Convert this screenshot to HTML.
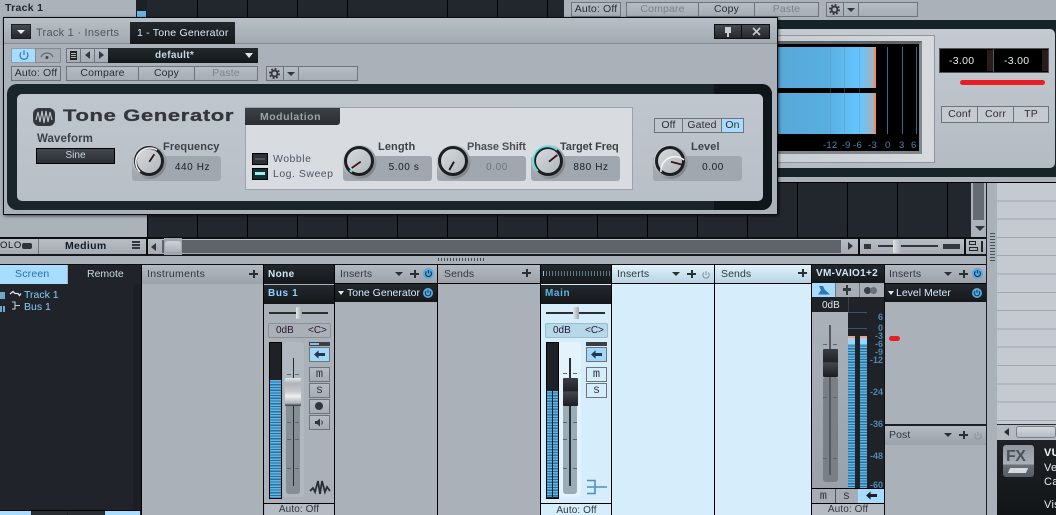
<!DOCTYPE html>
<html><head><meta charset="utf-8">
<style>
html,body{margin:0;padding:0;background:#a9b0b8}
#r{position:relative;width:1056px;height:515px;overflow:hidden;background:#aab1b9;font-family:"Liberation Sans",sans-serif;font-size:11px;color:#2b2e33}
#r div{position:absolute;box-sizing:border-box}
#r svg.i{position:absolute;overflow:visible}
.t{position:absolute;white-space:nowrap;line-height:12px;letter-spacing:.3px}
.c{text-align:center}
.b{font-weight:bold}
.btn{border:1px solid #6d747c;background:linear-gradient(#b6bcc3,#a6adb5);text-align:center;line-height:13px;color:#2b2e33;font-size:10.5px;letter-spacing:.15px;white-space:nowrap}
.ms{font-family:"Liberation Mono",monospace;font-size:12px;line-height:12px;color:#33363b}
.hd{background:linear-gradient(#b3bac1,#9aa1a9);height:19px}
.dk{background:linear-gradient(#23282d,#14181b)}
.vb{background:#a0a7ae;border-radius:3px}
.bars{background:repeating-linear-gradient(#5fb5e6 0 1.5px,#2d6f9c 1.5px 2.7px)}
.tk{width:4px;height:1px;background:#5f656c}
</style></head><body><div id="r">
<svg width="0" height="0" style="position:absolute"><defs>
<symbol id="pw" viewBox="0 0 12 12"><circle cx="6" cy="6" r="6" fill="#5aa9e0"/><path d="M3.8 3.8A3.2 3.2 0 1 0 8.2 3.8M6 2.2V6" stroke="#143a5a" stroke-width="1.3" fill="none"/></symbol>
<symbol id="pg" viewBox="0 0 12 12"><path d="M3.4 3.2A3.8 3.8 0 1 0 8.6 3.2M6 1.4V6" stroke="#8d949b" stroke-width="1.3" fill="none"/></symbol>
<symbol id="ar" viewBox="0 0 12 9"><path d="M0 4.5L5 0V2.8H12V6.2H5V9Z"/></symbol>
<symbol id="gr" viewBox="0 0 12 12"><circle cx="6" cy="6" r="3.2" fill="none" stroke="#33363b" stroke-width="2"/><circle cx="6" cy="6" r="5" fill="none" stroke="#33363b" stroke-width="2" stroke-dasharray="2 1.93"/></symbol>
</defs></svg>

<!-- arrangement background -->
<div style="left:0;top:0;width:136px;height:182px;background:#abb2ba"></div>
<span class="t b" style="left:5px;top:2px;color:#24272b;font-size:10.5px">Track 1</span>
<div style="left:136px;top:0;width:11px;height:18px;background:#1d2126"></div>
<div style="left:137px;top:11px;width:9px;height:7px;background:#6ab2e4"></div>
<div style="left:147px;top:0;width:420px;height:18px;background:#22272d"></div>
<div style="left:197px;top:0;width:1px;height:18px;background:#000"></div>
<div style="left:247px;top:0;width:1px;height:18px;background:#000"></div>
<div style="left:297px;top:0;width:1px;height:18px;background:#000"></div>
<div style="left:347px;top:0;width:1px;height:18px;background:#000"></div>
<div style="left:447px;top:0;width:1px;height:18px;background:#000"></div>
<div style="left:497px;top:0;width:1px;height:18px;background:#000"></div>
<div style="left:547px;top:0;width:1px;height:18px;background:#000"></div>

<!-- second plugin behind -->
<div style="left:564px;top:0;width:492px;height:182px;background:#aab1b9"></div>
<div class="btn" style="left:571px;top:2px;width:50px;height:15px">Auto: Off</div>
<div class="btn" style="left:626px;top:2px;width:73px;height:15px;color:#7b828a">Compare</div>
<div class="btn" style="left:698px;top:2px;width:57px;height:15px">Copy</div>
<div class="btn" style="left:754px;top:2px;width:65px;height:15px;color:#7b828a">Paste</div>
<div class="btn" style="left:826px;top:2px;width:18px;height:15px"></div>
<svg class="i" style="left:829px;top:4px" width="11" height="11"><use href="#gr"/></svg>
<div class="btn" style="left:843px;top:2px;width:16px;height:15px"></div>
<div style="left:847px;top:8px;width:0;height:0;border:4px solid transparent;border-top:4px solid #33363b"></div>
<div class="btn" style="left:858px;top:2px;width:60px;height:15px"></div>
<div style="left:777px;top:20px;width:279px;height:157px;background:#162327"></div>
<div style="left:777px;top:29px;width:278px;height:139px;background:linear-gradient(#c4cad0,#b4bbc3);border-radius:0 5px 5px 0"></div>
<div style="left:777px;top:35px;width:158px;height:128px;background:linear-gradient(90deg,#c8cdd2,#d6dadd);border:1px solid #8e959c;border-left:0"></div>
<div style="left:777px;top:41px;width:145px;height:113px;background:#000;border-top:3px solid #5e646b;border-right:3px solid #7e858c;border-bottom:3px solid #7e858c"></div>
<div style="left:777px;top:47px;width:98px;height:41px;background:linear-gradient(90deg,#58a8d9,#58aee0 50%,#66c6ff 85%,#a2b2bf 98%)"></div>
<div style="left:777px;top:93px;width:98px;height:41px;background:linear-gradient(90deg,#58a8d9,#58aee0 50%,#66c6ff 85%,#a2b2bf 98%)"></div>
<div style="left:874px;top:47px;width:1.5px;height:41px;background:#f08a60"></div>
<div style="left:874px;top:93px;width:1.5px;height:41px;background:#f08a60"></div>
<div style="left:830px;top:47px;width:1px;height:87px;background:rgba(90,140,170,.35)"></div>
<div style="left:844px;top:47px;width:1px;height:87px;background:rgba(90,140,170,.35)"></div>
<div style="left:859px;top:47px;width:1px;height:87px;background:rgba(90,140,170,.35)"></div>
<div style="left:887px;top:47px;width:1px;height:87px;background:#3d6a8c"></div>
<div style="left:902px;top:47px;width:1px;height:87px;background:#3d6a8c"></div>
<div style="left:916px;top:47px;width:1px;height:87px;background:#3d6a8c"></div>
<span class="t" style="left:823px;top:140px;color:#4f83aa;font-size:9.5px;letter-spacing:.2px;word-spacing:1.5px">-12 -9</span>
<span class="t" style="left:853px;top:140px;color:#4f83aa;font-size:9.5px">-6</span>
<span class="t" style="left:868px;top:140px;color:#4f83aa;font-size:9.5px">-3</span>
<span class="t" style="left:885px;top:140px;color:#4f83aa;font-size:9.5px">0</span>
<span class="t" style="left:899px;top:140px;color:#4f83aa;font-size:9.5px">3</span>
<span class="t" style="left:911px;top:140px;color:#4f83aa;font-size:9.5px">6</span>
<div style="left:939px;top:48px;width:110px;height:25px;background:#000;border:1px solid #555"></div>
<div style="left:987px;top:50px;width:7px;height:21px;background:#2a1c18"></div>
<div style="left:1042px;top:50px;width:6px;height:21px;background:#2a1c18"></div>
<div style="left:993px;top:49px;width:1px;height:23px;background:#555"></div>
<span class="t" style="left:949px;top:55px;color:#e8eef2;font-size:10.5px">-3.00</span>
<span class="t" style="left:1004px;top:55px;color:#e8eef2;font-size:10.5px">-3.00</span>
<div style="left:960px;top:80px;width:85px;height:5px;background:#ea1c24;border-radius:3px"></div>
<div class="btn" style="left:941px;top:106px;width:37px;height:17px;line-height:15px;background:#c4cad0">Conf</div>
<div class="btn" style="left:977px;top:106px;width:37px;height:17px;line-height:15px;background:#c4cad0">Corr</div>
<div class="btn" style="left:1013px;top:106px;width:36px;height:17px;line-height:15px;background:#c4cad0">TP</div>

<!-- arrangement lower -->
<div style="left:0;top:182px;width:147px;height:56px;background:#abb2ba"></div>
<div style="left:147px;top:182px;width:824px;height:56px;background:#22272d"></div>
<div style="left:147px;top:182px;width:909px;height:1px;background:#000"></div>
<div style="left:147px;top:182px;width:1px;height:56px;background:#000"></div>
<div style="left:197px;top:214px;width:1px;height:24px;background:#000"></div>
<div style="left:247px;top:214px;width:1px;height:24px;background:#000"></div>
<div style="left:297px;top:214px;width:1px;height:24px;background:#000"></div>
<div style="left:347px;top:214px;width:1px;height:24px;background:#000"></div>
<div style="left:397px;top:214px;width:1px;height:24px;background:#000"></div>
<div style="left:447px;top:214px;width:1px;height:24px;background:#000"></div>
<div style="left:497px;top:214px;width:1px;height:24px;background:#000"></div>
<div style="left:547px;top:214px;width:1px;height:24px;background:#000"></div>
<div style="left:597px;top:214px;width:1px;height:24px;background:#000"></div>
<div style="left:647px;top:214px;width:1px;height:24px;background:#000"></div>
<div style="left:697px;top:214px;width:1px;height:24px;background:#000"></div>
<div style="left:747px;top:214px;width:1px;height:24px;background:#000"></div>
<div style="left:797px;top:183px;width:1px;height:55px;background:#000"></div>
<div style="left:847px;top:183px;width:1px;height:55px;background:#000"></div>
<div style="left:897px;top:183px;width:1px;height:55px;background:#000"></div>
<div style="left:947px;top:183px;width:1px;height:55px;background:#000"></div>
<div style="left:971px;top:183px;width:16px;height:55px;background:#abb2ba"></div>
<div style="left:973px;top:183px;width:11px;height:37px;background:#666b72"></div>
<div style="left:975px;top:226px;width:0;height:0;border:5px solid transparent;border-top:5px solid #33363b"></div>
<!-- toolbar -->
<div style="left:0;top:237px;width:987px;height:2px;background:#0c0e10"></div>
<div style="left:0;top:239px;width:987px;height:15px;background:linear-gradient(#b8bec5,#a4abb3)"></div>
<div style="left:0;top:254px;width:987px;height:2px;background:#16181b"></div>
<div style="left:0;top:256px;width:987px;height:8px;background:#aab1b9"></div>
<span class="t" style="left:0;top:240px;font-size:9.5px;letter-spacing:.6px;color:#111">OLO</span>
<div style="left:22px;top:243px;width:10px;height:6px;background:#2f3338;border-radius:2px"></div>
<div style="left:38px;top:239px;width:1px;height:15px;background:#70767d"></div>
<span class="t b" style="left:65px;top:240px;color:#111a26;font-size:10.5px">Medium</span>
<div style="left:132px;top:241px;width:8px;height:2px;background:#33363b;box-shadow:0 3px 0 #33363b,0 6px 0 #33363b"></div>
<div style="left:146px;top:238px;width:2px;height:17px;background:#0c0e10"></div>
<div style="left:162px;top:240px;width:679px;height:13px;background:#5f646b"></div>
<div style="left:151px;top:243px;width:0;height:0;border:4px solid transparent;border-right:5px solid #33363b;border-left:0"></div>
<div style="left:164px;top:238px;width:18px;height:17px;background:#9fa6ae"></div>
<div style="left:165px;top:241px;width:16px;height:11px;background:linear-gradient(#cdd2d7,#aab0b7);border-radius:3px"></div>
<div style="left:848px;top:242px;width:0;height:0;border:4px solid transparent;border-left:5px solid #33363b;border-right:0"></div>
<div style="left:858px;top:238px;width:2px;height:17px;background:#0c0e10"></div>
<div style="left:864px;top:244px;width:7px;height:5px;background:#33363b"></div>
<div style="left:878px;top:245px;width:60px;height:2px;background:#33363b"></div>
<div style="left:893px;top:240px;width:8px;height:13px;background:linear-gradient(90deg,#dfe3e6,#aab0b7);border-radius:1px"></div>
<div style="left:943px;top:244px;width:17px;height:5px;background:#33363b"></div>
<div style="left:964px;top:238px;width:2px;height:17px;background:#0c0e10"></div>
<div style="left:969px;top:241px;width:7px;height:4px;border:1px solid #222"></div>
<div style="left:969px;top:247px;width:9px;height:4px;border:1px solid #222"></div>
<div style="left:981px;top:241px;width:1.5px;height:11px;background:#222"></div>
<div style="left:438px;top:258px;width:47px;height:3px;background:repeating-linear-gradient(90deg,#444a50 0 1px,transparent 1px 3px)"></div>

<!-- MIXER -->
<div style="left:0;top:264px;width:987px;height:1px;background:#0c0e10"></div>
<!-- console nav -->
<div style="left:0;top:265px;width:67px;height:19px;background:#a8ddff"></div>
<span class="t" style="left:15px;top:268px;color:#2470a8;font-size:10.5px;letter-spacing:.2px">Screen</span>
<div style="left:68px;top:265px;width:74px;height:19px;background:#20242a"></div>
<span class="t" style="left:87px;top:268px;color:#c6dcea;font-size:10.5px;letter-spacing:0">Remote</span>
<div style="left:0;top:284px;width:141px;height:231px;background:#20242a"></div>
<div style="left:133px;top:284px;width:8px;height:226px;background:#1b1e23"></div>
<div style="left:0;top:292px;width:5px;height:7px;background:#6ea6cc"></div>
<div style="left:0;top:306px;width:1.5px;height:6px;background:#6ea6cc;box-shadow:3px 0 0 #6ea6cc"></div>
<svg class="i" style="left:9px;top:290px" width="13" height="20" viewBox="0 0 13 20"><path d="M1 4 L4 1.5 L6 3.5 L9 3.5 L10.5 5.5 L12 3.5" stroke="#dfe6ec" stroke-width="1.3" fill="none"/><path d="M3 12H6V19H3M6 15.5H11" stroke="#c6d2da" fill="none" stroke-width="1"/></svg>
<span class="t" style="left:24px;top:289px;color:#86cdf8;font-size:10.5px;letter-spacing:0">Track 1</span>
<span class="t" style="left:24px;top:301px;color:#86cdf8;font-size:10.5px;letter-spacing:0">Bus 1</span>
<div style="left:0;top:510px;width:141px;height:1px;background:#000"></div>
<div style="left:0;top:511px;width:31px;height:4px;background:#a8ddff"></div>
<div style="left:32px;top:511px;width:35px;height:4px;background:#2a2e33"></div>
<div style="left:68px;top:511px;width:36px;height:4px;background:#2a2e33"></div>
<div style="left:105px;top:511px;width:35px;height:4px;background:#a8ddff"></div>
<!-- Instruments -->
<div style="left:141px;top:265px;width:1px;height:250px;background:#000"></div>
<div class="hd" style="left:142px;top:265px;width:121px"></div>
<span class="t" style="left:147px;top:268px;color:#33373c;font-size:10.5px;letter-spacing:.3px">Instruments</span>
<div style="left:249px;top:273px;width:9px;height:2px;background:#2b2e33"></div>
<div style="left:252.5px;top:270px;width:2px;height:8px;background:#2b2e33"></div>
<div style="left:263px;top:265px;width:1px;height:250px;background:#000"></div>
<!-- Bus 1 channel -->
<div style="left:264px;top:265px;width:70px;height:250px;background:#aab1b9"></div>
<div class="dk" style="left:264px;top:265px;width:70px;height:19px"></div>
<span class="t b" style="left:268px;top:269px;color:#cfe8f8;font-size:10px;letter-spacing:.4px">None</span>
<div class="dk" style="left:264px;top:285px;width:70px;height:19px"></div>
<span class="t b" style="left:268px;top:288px;color:#8fd3ff;font-size:10px;letter-spacing:.6px">Bus 1</span>
<div style="left:269px;top:312px;width:59px;height:2px;background:#2a2f2d"></div>
<div style="left:296px;top:307px;width:6px;height:12px;background:linear-gradient(90deg,#e6e9ec,#9fa5ac);border-radius:1px"></div>
<div class="btn" style="left:268px;top:323px;width:63px;height:15px;border-color:#8a9098;border-radius:2px;background:#a9b0b8"></div>
<span class="t" style="left:276px;top:325px;font-size:10px;letter-spacing:0;color:#2a1530">0dB</span>
<span class="t" style="left:308px;top:325px;font-size:10px;letter-spacing:0;color:#2a1530">&lt;C&gt;</span>
<div style="left:283px;top:342px;width:21px;height:155px;background:#b2b8bf;border-radius:3px"></div>
<div style="left:269px;top:342px;width:13px;height:157px;background:#1e2226;border:1px solid #000"></div>
<div class="bars" style="left:270px;top:380px;width:11px;height:118px"></div>
<div style="left:286px;top:380px;width:14px;height:114px;background:#888e96;border-radius:3px"></div>
<div class="tk" style="left:287px;top:374px"></div><div class="tk" style="left:295px;top:374px"></div>
<div class="tk" style="left:287px;top:422px"></div><div class="tk" style="left:295px;top:422px"></div>
<div class="tk" style="left:287px;top:439px"></div><div class="tk" style="left:295px;top:439px"></div>
<div class="tk" style="left:287px;top:468px"></div><div class="tk" style="left:295px;top:468px"></div>
<div style="left:292.5px;top:358px;width:1.5px;height:128px;background:#25292d"></div>
<div style="left:285px;top:378px;width:16px;height:28px;background:linear-gradient(#e4e7ea,#aeb3b9 20%,#c8ccd1 50%,#eef0f2 65%,#adb2b8 90%,#2e3236);border-radius:1px"></div>
<div style="left:309px;top:342px;width:21px;height:4px;background:#3b3f44"></div>
<div style="left:310px;top:343px;width:9px;height:2px;background:#7cc3ef"></div>
<div class="btn" style="left:309px;top:347px;width:21px;height:15px;background:#a3d7f8"></div>
<svg class="i" style="left:314px;top:350px;fill:#1e3a52" width="11" height="9"><use href="#ar"/></svg>
<div class="btn ms" style="left:309px;top:367px;width:21px;height:15px">m</div>
<div class="btn ms" style="left:309px;top:383px;width:21px;height:15px">s</div>
<div class="btn" style="left:309px;top:399px;width:21px;height:15px"></div>
<div style="left:315px;top:402px;width:8px;height:8px;background:#33363b;border-radius:50%"></div>
<div class="btn" style="left:309px;top:415px;width:21px;height:15px"></div>
<svg class="i" style="left:315px;top:418px" width="9" height="9" viewBox="0 0 9 9"><path d="M0 3H2L5 .5V8.5L2 6H0Z" fill="#33363b"/><path d="M6.5 2.5Q8 4.5 6.5 6.5" stroke="#33363b" fill="none"/></svg>
<svg class="i" style="left:309px;top:479px" width="22" height="17" viewBox="0 0 22 17"><path d="M1 12 L4 9 L6 13 L9 2 L11 15 L13 2 L16 13 L18 8 L21 12" stroke="#2a2e33" stroke-width="1.8" fill="none"/></svg>
<div style="left:264px;top:503px;width:70px;height:1px;background:#000"></div>
<div style="left:265px;top:504px;width:69px;height:11px;background:#b6bcc3;border-radius:2px 2px 0 0"></div>
<span class="t c" style="left:264px;top:504px;width:70px;font-size:10px;letter-spacing:.1px;color:#33363b">Auto: Off</span>
<div style="left:334px;top:265px;width:1px;height:250px;background:#000"></div>
<!-- Inserts 1 -->
<div class="hd" style="left:335px;top:265px;width:102px"></div>
<span class="t" style="left:340px;top:268px;color:#33373c;font-size:10.5px;letter-spacing:.1px">Inserts</span>
<div style="left:395px;top:272px;border:4px solid transparent;border-top:4px solid #2b2e33"></div>
<div style="left:410px;top:273px;width:9px;height:2px;background:#2b2e33"></div>
<div style="left:413.5px;top:270px;width:2px;height:8px;background:#2b2e33"></div>
<svg class="i" style="left:423px;top:268px" width="11" height="11"><use href="#pw"/></svg>
<div style="left:335px;top:283px;width:102px;height:1px;background:#000"></div>
<div class="dk" style="left:335px;top:284px;width:102px;height:18px"></div>
<div style="left:338px;top:291px;border:3px solid transparent;border-top:4px solid #dfe6ec"></div>
<span class="t" style="left:347px;top:287px;color:#d9ebf6;font-size:10.5px;letter-spacing:0">Tone Generator</span>
<svg class="i" style="left:423px;top:288px" width="10" height="10"><use href="#pw"/></svg>
<div style="left:437px;top:265px;width:1px;height:250px;background:#000"></div>
<div class="hd" style="left:438px;top:265px;width:102px"></div>
<span class="t" style="left:444px;top:268px;color:#33373c;font-size:10.5px;letter-spacing:.1px">Sends</span>
<div style="left:522px;top:272px;width:9px;height:2px;background:#2b2e33"></div>
<div style="left:525.5px;top:269px;width:2px;height:8px;background:#2b2e33"></div>
<div style="left:437px;top:283px;width:103px;height:1px;background:#000"></div>
<div style="left:540px;top:265px;width:1px;height:250px;background:#000"></div>
<!-- Main channel -->
<div style="left:541px;top:265px;width:71px;height:250px;background:#d6eefb"></div>
<div class="dk" style="left:541px;top:265px;width:71px;height:19px"></div>
<div style="left:543px;top:271px;width:67px;height:5px;background:repeating-linear-gradient(90deg,#5e7a8c 0 1px,transparent 1px 3px)"></div>
<div style="left:543px;top:271px;width:1px;height:5px;background:#7cd0f0"></div>
<div class="dk" style="left:541px;top:285px;width:71px;height:19px"></div>
<span class="t b" style="left:545px;top:288px;color:#5db4e0;font-size:10px;letter-spacing:.6px">Main</span>
<div style="left:546px;top:312px;width:59px;height:2px;background:#2a2f2d"></div>
<div style="left:573px;top:307px;width:6px;height:12px;background:linear-gradient(90deg,#e6e9ec,#9fa5ac);border-radius:1px"></div>
<div class="btn" style="left:545px;top:323px;width:63px;height:15px;border-color:#9abccc;border-radius:2px;background:#b6d9ea"></div>
<span class="t" style="left:553px;top:325px;font-size:10px;letter-spacing:0;color:#2a1530">0dB</span>
<span class="t" style="left:585px;top:325px;font-size:10px;letter-spacing:0;color:#2a1530">&lt;C&gt;</span>
<div style="left:559px;top:342px;width:22px;height:155px;background:#e3f3fb;border-radius:3px"></div>
<div style="left:546px;top:342px;width:13px;height:157px;background:#1e2226;border:1px solid #000"></div>
<div class="bars" style="left:547px;top:391px;width:5px;height:106px"></div>
<div class="bars" style="left:553px;top:391px;width:5px;height:106px"></div>
<div style="left:563px;top:380px;width:14px;height:114px;background:#9aacb5;border-radius:3px"></div>
<div class="tk" style="left:563px;top:373px"></div><div class="tk" style="left:573px;top:373px"></div>
<div class="tk" style="left:563px;top:422px"></div><div class="tk" style="left:573px;top:422px"></div>
<div class="tk" style="left:563px;top:439px"></div><div class="tk" style="left:573px;top:439px"></div>
<div class="tk" style="left:563px;top:468px"></div><div class="tk" style="left:573px;top:468px"></div>
<div style="left:569px;top:358px;width:1.5px;height:128px;background:#2a2f33"></div>
<div style="left:563px;top:378px;width:15px;height:28px;background:linear-gradient(#3a3e44,#202327 45%,#43474d 50%,#1a1c20);border-radius:1px"></div>
<div style="left:586px;top:342px;width:21px;height:4px;background:#3b3f44"></div>
<div class="btn" style="left:586px;top:347px;width:21px;height:15px;background:#a3d7f8"></div>
<svg class="i" style="left:591px;top:350px;fill:#1e3a52" width="11" height="9"><use href="#ar"/></svg>
<div class="btn ms" style="left:586px;top:367px;width:21px;height:15px;background:#d6eefb">m</div>
<div class="btn ms" style="left:586px;top:383px;width:21px;height:15px;background:#d6eefb">s</div>
<svg class="i" style="left:586px;top:478px" width="22" height="18" viewBox="0 0 22 18"><path d="M1 2.5H9V15.5H1M1 9H8M9 9H21" stroke="#4c8ec0" stroke-width="1.6" fill="none"/></svg>
<div style="left:541px;top:503px;width:71px;height:1px;background:#000"></div>
<span class="t c" style="left:541px;top:505px;width:71px;font-size:10px;letter-spacing:.1px;color:#33363b">Auto: Off</span>
<div style="left:611px;top:265px;width:1px;height:250px;background:#000"></div>
<!-- Inserts blue -->
<div style="left:612px;top:265px;width:199px;height:250px;background:#d6eefb"></div>
<div style="left:612px;top:265px;width:199px;height:18px;background:linear-gradient(#e2f3fc,#b6d4e4)"></div>
<div style="left:612px;top:283px;width:199px;height:1px;background:#000"></div>
<div style="left:714px;top:265px;width:1px;height:250px;background:#000"></div>
<span class="t" style="left:617px;top:268px;color:#33373c;font-size:10.5px;letter-spacing:.1px">Inserts</span>
<div style="left:672px;top:272px;border:4px solid transparent;border-top:4px solid #2b2e33"></div>
<div style="left:687px;top:273px;width:9px;height:2px;background:#2b2e33"></div>
<div style="left:690.5px;top:270px;width:2px;height:8px;background:#2b2e33"></div>
<svg class="i" style="left:701px;top:270px" width="10" height="10"><use href="#pg"/></svg>
<span class="t" style="left:721px;top:268px;color:#33373c;font-size:10.5px;letter-spacing:.1px">Sends</span>
<div style="left:798px;top:272px;width:9px;height:2px;background:#2b2e33"></div>
<div style="left:801.5px;top:269px;width:2px;height:8px;background:#2b2e33"></div>
<div style="left:811px;top:265px;width:1px;height:250px;background:#000"></div>
<!-- VM channel -->
<div style="left:812px;top:265px;width:72px;height:250px;background:#9aa1a9"></div>
<div class="dk" style="left:812px;top:265px;width:72px;height:18px"></div>
<span class="t b" style="left:816px;top:268px;color:#cfe8f8;font-size:10px">VM-VAIO1+2</span>
<div style="left:812px;top:283px;width:23px;height:14px;background:#a8dcff"></div>
<div style="left:835px;top:283px;width:24px;height:14px;background:#a6adb5;border-left:1px solid #70767d"></div>
<div style="left:859px;top:283px;width:25px;height:14px;background:#a6adb5;border-left:1px solid #70767d"></div>
<svg class="i" style="left:818px;top:285px" width="12" height="10" viewBox="0 0 12 10"><path d="M1 1H5L7 5L12 9.5H0L3 5Z" fill="#2d78b0"/></svg>
<div style="left:846px;top:285px;width:2px;height:10px;background:#33363b"></div>
<div style="left:843px;top:288px;width:8px;height:3px;background:#33363b"></div>
<div style="left:864px;top:287px;width:7px;height:7px;background:#3b3f44;border-radius:50%"></div>
<div style="left:870px;top:287px;width:7px;height:7px;background:#6a7078;border-radius:50%"></div>
<div style="left:812px;top:297px;width:72px;height:15px;background:#1f2327"></div>
<div style="left:848px;top:297px;width:1px;height:15px;background:#3a3e44"></div>
<span class="t" style="left:822px;top:300px;color:#dfe8ee;font-size:10px;letter-spacing:0">0dB</span>
<div style="left:812px;top:312px;width:36px;height:177px;background:linear-gradient(#aab1b9,#9aa1a9)"></div>
<div style="left:823px;top:377px;width:15px;height:105px;background:#7a8088;border-radius:3px"></div>
<div style="left:829px;top:325px;width:2px;height:150px;background:#555a60"></div>
<div class="tk" style="left:823px;top:344px"></div><div class="tk" style="left:833px;top:344px"></div>
<div class="tk" style="left:823px;top:397px"></div><div class="tk" style="left:833px;top:397px"></div>
<div class="tk" style="left:823px;top:458px"></div><div class="tk" style="left:833px;top:458px"></div>
<div style="left:823px;top:349px;width:15px;height:28px;background:linear-gradient(#3a3e44,#202327 45%,#43474d 50%,#1a1c20);border-radius:1px"></div>
<div style="left:848px;top:312px;width:36px;height:177px;background:#1f2327"></div>
<div style="left:848px;top:336px;width:7px;height:2px;background:#f0a080"></div>
<div style="left:860px;top:336px;width:7px;height:2px;background:#f0a080"></div>
<div style="left:848px;top:338px;width:7px;height:6px;background:#9ad6fa"></div>
<div style="left:860px;top:338px;width:7px;height:6px;background:#9ad6fa"></div>
<div class="bars" style="left:848px;top:344px;width:7px;height:144px"></div>
<div class="bars" style="left:860px;top:344px;width:7px;height:144px"></div>
<div style="left:848px;top:312px;width:19px;height:1px;background:#34587a"></div>
<div style="left:848px;top:328px;width:19px;height:1px;background:#34587a"></div>
<span class="t b" style="left:878px;top:311px;color:#4f88b2;font-size:9px;letter-spacing:0">6</span>
<span class="t b" style="left:878px;top:322px;color:#4f88b2;font-size:9px;letter-spacing:0">0</span>
<span class="t b" style="left:875px;top:330px;color:#4f88b2;font-size:9px;letter-spacing:0">-3</span>
<span class="t b" style="left:875px;top:338px;color:#4f88b2;font-size:9px;letter-spacing:0">-6</span>
<span class="t b" style="left:875px;top:346px;color:#4f88b2;font-size:9px;letter-spacing:0">-9</span>
<span class="t b" style="left:870px;top:354px;color:#4f88b2;font-size:9px;letter-spacing:0">-12</span>
<span class="t b" style="left:870px;top:386px;color:#4f88b2;font-size:9px;letter-spacing:0">-24</span>
<span class="t b" style="left:870px;top:418px;color:#4f88b2;font-size:9px;letter-spacing:0">-36</span>
<span class="t b" style="left:870px;top:450px;color:#4f88b2;font-size:9px;letter-spacing:0">-48</span>
<span class="t b" style="left:870px;top:479px;color:#4f88b2;font-size:9px;letter-spacing:0">-60</span>
<div style="left:812px;top:488px;width:72px;height:15px;background:#a6adb5;border-top:1px solid #000"></div>
<span class="t c ms" style="left:812px;top:490px;width:23px">m</span>
<span class="t c ms" style="left:835px;top:490px;width:23px">s</span>
<div style="left:835px;top:489px;width:1px;height:14px;background:#50555b"></div>
<div style="left:858px;top:489px;width:26px;height:14px;background:#a8dcff"></div>
<svg class="i" style="left:866px;top:491px;fill:#1e2226" width="11" height="9"><use href="#ar"/></svg>
<div style="left:812px;top:503px;width:72px;height:1px;background:#000"></div>
<div style="left:812px;top:504px;width:72px;height:11px;background:#b6bcc3"></div>
<span class="t c" style="left:812px;top:504px;width:72px;font-size:10px;letter-spacing:.1px;color:#33363b">Auto: Off</span>
<div style="left:884px;top:265px;width:1px;height:250px;background:#0c0e10"></div>
<!-- Right inserts -->
<div class="hd" style="left:885px;top:265px;width:101px"></div>
<span class="t" style="left:889px;top:268px;color:#33373c;font-size:10.5px;letter-spacing:.1px">Inserts</span>
<div style="left:944px;top:272px;border:4px solid transparent;border-top:4px solid #2b2e33"></div>
<div style="left:959px;top:273px;width:9px;height:2px;background:#2b2e33"></div>
<div style="left:962.5px;top:270px;width:2px;height:8px;background:#2b2e33"></div>
<svg class="i" style="left:972px;top:268px" width="11" height="11"><use href="#pw"/></svg>
<div style="left:884px;top:283px;width:102px;height:1px;background:#000"></div>
<div class="dk" style="left:885px;top:284px;width:101px;height:18px"></div>
<div style="left:888px;top:291px;border:3px solid transparent;border-top:4px solid #dfe6ec"></div>
<span class="t" style="left:896px;top:287px;color:#d9ebf6;font-size:10.5px;letter-spacing:0">Level Meter</span>
<svg class="i" style="left:972px;top:288px" width="10" height="10"><use href="#pw"/></svg>
<div style="left:889px;top:336px;width:11px;height:5px;background:#e81c24;border-radius:3px"></div>
<div style="left:885px;top:424px;width:101px;height:2px;background:#1c1f23"></div>
<div class="hd" style="left:885px;top:426px;width:101px;height:19px"></div>
<span class="t" style="left:889px;top:429px;color:#33373c;font-size:10.5px;letter-spacing:.1px">Post</span>
<div style="left:944px;top:433px;border:4px solid transparent;border-top:4px solid #2b2e33"></div>
<div style="left:959px;top:434px;width:9px;height:2px;background:#2b2e33"></div>
<div style="left:962.5px;top:431px;width:2px;height:8px;background:#2b2e33"></div>
<svg class="i" style="left:973px;top:431px" width="10" height="10"><use href="#pg"/></svg>
<!-- right strip -->
<div style="left:986px;top:183px;width:11px;height:332px;background:#aab1b9;border-left:1px solid #1c1f23"></div>
<div style="left:990px;top:233px;width:5px;height:30px;background:repeating-linear-gradient(#4a5056 0 1px,transparent 1px 3px)"></div>
<div style="left:997px;top:183px;width:59px;height:241px;background:repeating-linear-gradient(#c4cad0 0 17.3px,#a0a7ae 17.3px 18.3px)"></div>
<div style="left:997px;top:424px;width:59px;height:16px;background:#b4bbc2;border-top:1px solid #2a2e33"></div>
<div style="left:1004px;top:428px;border:4px solid transparent;border-right:5px solid #2b2e33;border-left:0;width:0;height:0"></div>
<div style="left:1016px;top:426px;width:40px;height:12px;background:linear-gradient(#d4d8dc,#b4bbc2);border:1px solid #7a8088;border-radius:3px"></div>
<div style="left:997px;top:440px;width:59px;height:75px;background:linear-gradient(#1e2226,#121518)"></div>
<div style="left:1003px;top:445px;width:31px;height:32px;background:linear-gradient(#8f969d,#a9b0b6 60%,#6a7177 62%,#555b62);border-radius:3px"></div>
<span class="t b" style="left:1006px;top:449px;color:#4c5259;font-size:16px;letter-spacing:-.5px;line-height:16px">FX</span>
<div style="left:1009px;top:468px;width:18px;height:5px;background:#d6dade;transform:skewX(-25deg)"></div>
<span class="t b" style="left:1044px;top:447px;color:#f2f6f8;font-size:11px">VU</span>
<span class="t" style="left:1044px;top:462px;color:#e6edf2;font-size:11px">Ve</span>
<span class="t" style="left:1044px;top:476px;color:#e6edf2;font-size:11px">Ca</span>
<span class="t" style="left:1044px;top:499px;color:#e6edf2;font-size:11px">Vis</span>
<div style="left:977px;top:177px;width:79px;height:5px;background:#aab1b9"></div>
<div style="left:777px;top:177px;width:200px;height:5px;background:#aab1b9"></div>

<!-- MAIN PLUGIN WINDOW -->
<div style="left:3px;top:17px;width:775px;height:198px;background:#aab1b9;border:1px solid #0a0c0e;box-shadow:1px 1px 3px rgba(0,0,0,.6)"></div>
<div style="left:4px;top:18px;width:773px;height:26px;background:linear-gradient(#b9bfc6,#a3aab2);border-bottom:1px solid #848a92"></div>
<div style="left:11px;top:24px;width:20px;height:15px;background:linear-gradient(#44494f,#24282c);border:1px solid #1c1f23"></div>
<div style="left:17px;top:30px;border:4px solid transparent;border-top:4px solid #e8eef2"></div>
<span class="t" style="left:36px;top:27px;color:#4f565e;font-size:11px;letter-spacing:.25px">Track 1 · Inserts</span>
<div class="dk" style="left:130px;top:22px;width:105px;height:22px"></div>
<span class="t" style="left:137px;top:27px;color:#d9ebf6;font-size:10.5px;letter-spacing:.2px">1 - Tone Generator</span>
<div style="left:714px;top:24px;width:56px;height:15px;background:linear-gradient(#44494f,#24282c);border:1px solid #0c0e10"></div>
<div style="left:741px;top:25px;width:1px;height:13px;background:#0c0e10"></div>
<div style="left:725px;top:27px;width:6px;height:6px;background:#c6ccd2"></div>
<div style="left:727px;top:33px;width:2px;height:4px;background:#c6ccd2"></div>
<svg class="i" style="left:752px;top:27px" width="9" height="9" viewBox="0 0 9 9"><path d="M1 1L8 8M8 1L1 8" stroke="#c6ccd2" stroke-width="1.6"/></svg>

<div style="left:11px;top:48px;width:25px;height:15px;background:#a8dcff;border:1px solid #88a0b0"></div>
<div style="left:35px;top:48px;width:26px;height:15px;background:#a6adb5;border:1px solid #848a92"></div>
<svg class="i" style="left:18px;top:49px" width="40" height="13" viewBox="0 0 40 13"><path d="M3.2 3.5A4 4 0 1 0 8.8 3.5M6 1.5V6" stroke="#2d78b0" stroke-width="1.2" fill="none"/><path d="M23 8A6.5 6.5 0 0 1 35 8" stroke="#555b62" fill="none"/><circle cx="29" cy="8.5" r="1.5" fill="#444"/></svg>
<div class="btn" style="left:66px;top:48px;width:15px;height:15px"></div>
<div style="left:70px;top:51px;width:7px;height:9px;border:1px solid #222;background:repeating-linear-gradient(#222 0 1px,transparent 1px 2px)"></div>
<div class="btn" style="left:80px;top:48px;width:15px;height:15px"></div>
<div class="btn" style="left:94px;top:48px;width:15px;height:15px"></div>
<div style="left:85px;top:51px;border:4px solid transparent;border-right:5px solid #33363b;border-left:0;width:0;height:0"></div>
<div style="left:99px;top:51px;border:4px solid transparent;border-left:5px solid #33363b;border-right:0;width:0;height:0"></div>
<div class="dk" style="left:108px;top:48px;width:150px;height:15px"></div>
<span class="t c b" style="left:108px;top:50px;width:133px;color:#c6d8e4;font-size:10px">default*</span>
<div style="left:245px;top:53px;border:4px solid transparent;border-top:5px solid #dfe6ec"></div>
<div class="btn" style="left:11px;top:66px;width:50px;height:15px">Auto: Off</div>
<div class="btn" style="left:66px;top:66px;width:73px;height:15px">Compare</div>
<div class="btn" style="left:138px;top:66px;width:57px;height:15px">Copy</div>
<div class="btn" style="left:194px;top:66px;width:64px;height:15px;color:#7b828a">Paste</div>
<div class="btn" style="left:266px;top:66px;width:18px;height:15px"></div>
<svg class="i" style="left:269px;top:68px" width="11" height="11"><use href="#gr"/></svg>
<div class="btn" style="left:283px;top:66px;width:16px;height:15px"></div>
<div style="left:287px;top:72px;border:4px solid transparent;border-top:4px solid #33363b"></div>
<div class="btn" style="left:298px;top:66px;width:60px;height:15px"></div>

<div style="left:7px;top:84px;width:765px;height:126px;background:#1a2529;border-radius:10px"></div>
<div style="left:714px;top:84px;width:58px;height:126px;background:#0e1619;border-radius:0 10px 10px 0"></div>
<div style="left:17px;top:94px;width:746px;height:107px;background:linear-gradient(#c0c6cd,#b8bfc6);border-radius:5px"></div>
<svg class="i" style="left:33px;top:108px" width="22" height="18" viewBox="0 0 22 18"><rect x="0" y="0" width="22" height="18" rx="6" fill="#34383d"/><path d="M3 12L5 4L7 14L9 3L11 15L13 3L15 14L17 4L19 12" stroke="#c0c6cd" stroke-width="1.1" fill="none"/></svg>
<span class="t b" style="left:63px;top:106px;color:#33373c;font-size:16.5px;line-height:20px;letter-spacing:.5px;transform:scaleX(1.33);transform-origin:left center;-webkit-text-stroke:.3px #33373c">Tone Generator</span>
<span class="t b" style="left:37px;top:133px;color:#3d4146;font-size:11.5px;letter-spacing:.1px">Waveform</span>
<div style="left:36px;top:148px;width:79px;height:16px;background:linear-gradient(#43484e,#2c3035);border:1px solid #000"></div>
<span class="t c" style="left:36px;top:150px;width:79px;color:#c6d8e4;font-size:10px;letter-spacing:0">Sine</span>

<div class="vb" style="left:132px;top:156px;width:89px;height:25px"></div>
<div style="left:245px;top:107px;width:388px;height:83px;background:#d8dce1;border:1px solid #9ba2a9"></div>
<div style="left:245px;top:108px;width:95px;height:17px;background:linear-gradient(#3c4146,#2a2e33);border-radius:0 0 3px 0"></div>
<span class="t b" style="left:260px;top:111px;color:#9ba3aa;font-size:10.5px;letter-spacing:.5px">Modulation</span>
<div class="vb" style="left:343px;top:156px;width:89px;height:25px"></div>
<div class="vb" style="left:437px;top:156px;width:89px;height:25px"></div>
<div class="vb" style="left:531px;top:156px;width:89px;height:25px"></div>
<div class="vb" style="left:653px;top:156px;width:89px;height:25px"></div>
<span class="t b" style="left:163px;top:141px;color:#3d4146;font-size:11px;letter-spacing:.1px">Frequency</span>
<span class="t c" style="left:155px;top:162px;width:75px;font-size:10px;letter-spacing:.6px;color:#1b1e22">440 Hz</span>
<div style="left:252px;top:153px;width:16px;height:12px;background:#2c3236;border:1px solid #000"></div>
<div style="left:255px;top:158px;width:10px;height:2px;background:#4a5055"></div>
<div style="left:252px;top:168px;width:16px;height:12px;background:#123036;border:1px solid #000"></div>
<div style="left:255px;top:172px;width:10px;height:3px;background:#9cf0ee"></div>
<span class="t" style="left:273px;top:153px;color:#4c5560;font-size:10.5px;letter-spacing:.5px">Wobble</span>
<span class="t" style="left:273px;top:168px;color:#4c5560;font-size:10.5px;letter-spacing:.5px">Log. Sweep</span>
<span class="t b" style="left:378px;top:141px;color:#3d4146;font-size:11px;letter-spacing:.1px">Length</span>
<span class="t c" style="left:375px;top:162px;width:58px;font-size:10px;letter-spacing:.6px;color:#1b1e22">5.00 s</span>
<span class="t b" style="left:467px;top:141px;color:#4c5055;font-size:11px;letter-spacing:-.1px">Phase Shift</span>
<span class="t c" style="left:468px;top:162px;width:58px;font-size:10px;letter-spacing:.6px;color:#6e757c">0.00</span>
<span class="t b" style="left:560px;top:141px;color:#3d4146;font-size:11px;letter-spacing:-.1px">Target Freq</span>
<span class="t c" style="left:562px;top:162px;width:58px;font-size:10px;letter-spacing:.6px;color:#1b1e22">880 Hz</span>
<div class="btn" style="left:654px;top:118px;width:29px;height:15px;background:#c0c6cd">Off</div>
<div class="btn" style="left:682px;top:118px;width:40px;height:15px;background:#c0c6cd">Gated</div>
<div class="btn" style="left:721px;top:118px;width:23px;height:15px;background:#a8dcff">On</div>
<span class="t b" style="left:691px;top:141px;color:#3d4146;font-size:11px;letter-spacing:.1px">Level</span>
<span class="t c" style="left:684px;top:162px;width:58px;font-size:10px;letter-spacing:.6px;color:#1b1e22">0.00</span>

<svg class="i" style="left:0;top:0" width="1056" height="515" viewBox="0 0 1056 515">
<defs><linearGradient id="g" x1="0" y1="0" x2="1" y2="1"><stop offset="0" stop-color="#d9dde0"/><stop offset="1" stop-color="#aeb4ba"/></linearGradient>
<linearGradient id="h" x1="0" y1="0" x2="1" y2="1"><stop offset="0" stop-color="#e0e3e6"/><stop offset="1" stop-color="#6e7379"/></linearGradient></defs>
<g fill="url(#h)">
<circle cx="149.5" cy="162" r="17"/><circle cx="359.5" cy="162" r="17"/><circle cx="453.5" cy="162" r="17"/><circle cx="548.5" cy="162" r="17"/><circle cx="670.5" cy="162" r="17"/>
</g>
<g fill="url(#g)" stroke="#1c1f22" stroke-width="3">
<circle cx="149" cy="161" r="13.5"/><circle cx="359" cy="161" r="13.5"/><circle cx="453" cy="161" r="13.5"/><circle cx="548" cy="161" r="13.5"/><circle cx="670" cy="161" r="13.5"/>
</g>
<g fill="none" stroke="#f2f4f6" stroke-width="1.6">
<path d="M140 172A14 14 0 0 1 157 150"/><path d="M661 172A14 14 0 0 1 684 160"/>
</g>
<path d="M538 171A14 14 0 0 1 557 150" fill="none" stroke="#5fe0e0" stroke-width="1.7"/>
<path d="M350 170L352 172" stroke="#5fe0e0" stroke-width="2.2"/>
<g stroke-width="1.8" fill="none">
<path d="M149.3 161.7L154.3 154.3" stroke="#3a1218"/><path d="M351.7 168L360.7 161.7" stroke="#3a1218"/><path d="M449.3 170L454 161.7" stroke="#111"/><path d="M549 161.7L557.3 155" stroke="#3a1218"/><path d="M671 161.7L683.3 165" stroke="#3a1218"/>
</g>
</svg>
</div></body></html>
